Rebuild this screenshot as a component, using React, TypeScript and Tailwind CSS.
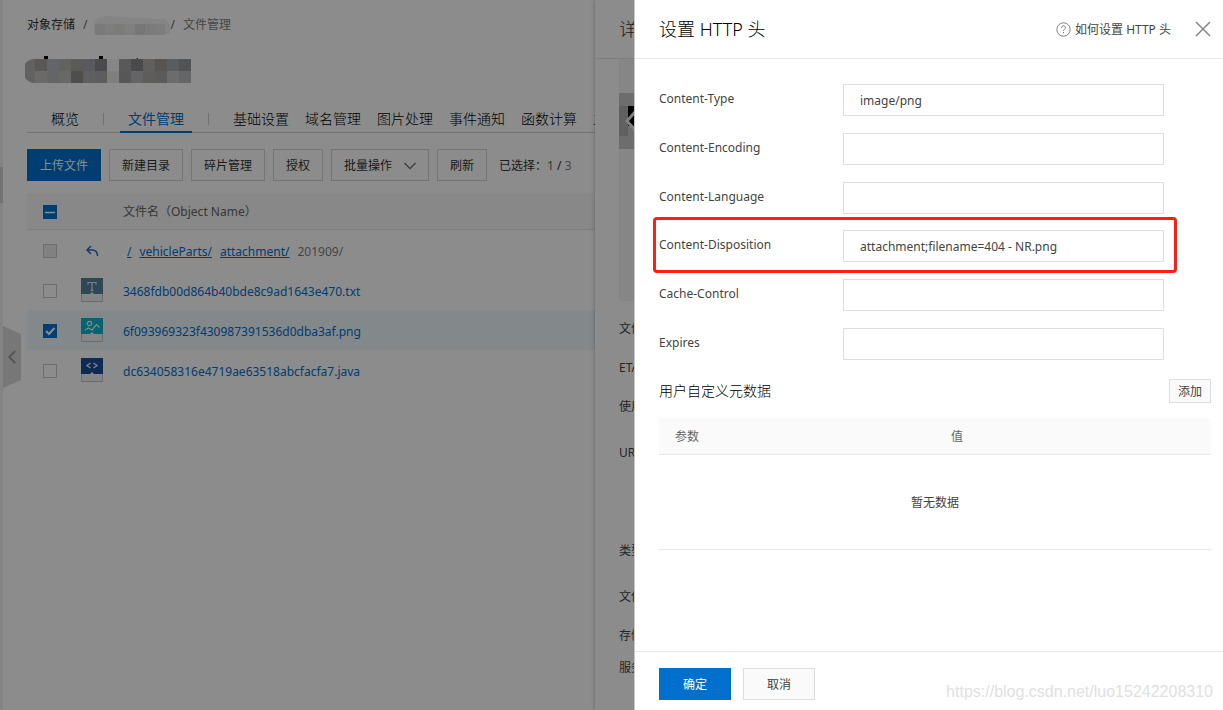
import type { ReactNode } from "react";
import { ChevronLeft } from "lucide-react";

const tabs = ["基础设置", "域名管理", "图片处理", "事件通知", "函数计算", "主"];

const details = [
  { label: "文件名", gap: "mt-[18px]" },
  { label: "ETAG", gap: "mt-[19px]" },
  { label: "使用", gap: "mt-[19px]" },
  { label: "URL", gap: "mt-[26px]" },
  { label: "类型", gap: "mt-[78px]" },
  { label: "文件", gap: "mt-[26px]" },
  { label: "存储", gap: "mt-[19px]" },
  { label: "服务", gap: "mt-[12px]" },
];

const headers = [
  { name: "Content-Type", value: "image/png" },
  { name: "Content-Encoding", value: "" },
  { name: "Content-Language", value: "" },
  { name: "Content-Disposition", value: "attachment;filename=404 - NR.png", marked: true },
  { name: "Cache-Control", value: "" },
  { name: "Expires", value: "" },
];

type FileKind = "txt" | "png" | "java";

const files: { name: string; kind: FileKind; checked: boolean }[] = [
  { name: "3468fdb00d864b40bde8c9ad1643e470.txt", kind: "txt", checked: false },
  { name: "6f093969323f430987391536d0dba3af.png", kind: "png", checked: true },
  { name: "dc634058316e4719ae63518abcfacfa7.java", kind: "java", checked: false },
];

const titleBlocks = [
  ["#a5a19c", "#b5babd", "#b3b2ad", "#a8a59f", "#a2a5aa", "#89898c", "#f5f5f5", "#a3a3a5", "#87878a", "#b0aeab", "#9e999a", "#a6a8a9", "#95979a"],
  ["#c5c2bf", "#b6b9bc", "#bebebc", "#928e8a", "#abaeb1", "#a9a9ae", "#e9e8e5", "#9f9f9f", "#b5b7ba", "#aca9a4", "#a8a4a5", "#c5c5c5", "#b5b8bc"],
];

const crumbBlocks = ["#dedede", "#e3e3e2", "#e0e0df", "#e8e8e8", "#d9d9d8", "#dfe0df", "#e4e4e3"];

function FileIcon({ kind }: { kind: FileKind }) {
  const color = { txt: "#55809b", png: "#0bb4cd", java: "#1a4f9c" }[kind];
  return (
    <svg width="22" height="24" viewBox="0 0 22 24" aria-hidden="true">
      <path d="M.5 15v8.500h21V15" fill="#f2f2f2" stroke="#c4c4c4" />
      <path d="M0 0h22v16h-9l-2-2-2 2H0z" fill={color} />
      {kind === "txt" && (
        <path d="M7 6.500V4.500h8v2M11 4.500v8M9.500 12.500h3" fill="none" stroke="#e3ebef" strokeWidth="1.200" />
      )}
      {kind === "png" && (
        <g fill="none" stroke="#e8f9fb" strokeWidth="1.200">
          <circle cx="8.500" cy="5.500" r="2.200" />
          <path d="M4 12l3.500-2 3.500 2 4.500-5.500 3 3" />
        </g>
      )}
      {kind === "java" && (
        <path d="M9.500 5L6 7.500 9.500 10M12.500 5L16 7.500 12.500 10" fill="none" stroke="#edf2f9" strokeWidth="1.300" />
      )}
    </svg>
  );
}

function Box({ label, state }: { label: string; state: "on" | "off" | "mixed" | "disabled" }) {
  const filled = state === "on" || state === "mixed";
  return (
    <span className="relative flex size-3.5">
      <input
        type="checkbox"
        aria-label={label}
        defaultChecked={state === "on"}
        disabled={state === "disabled"}
        className={
          filled
            ? "size-3.5 appearance-none bg-[#0070cc]"
            : state === "disabled"
              ? "size-3.5 appearance-none border border-[#c8c8c8] bg-[#ebebeb]"
              : "size-3.5 appearance-none border border-[#c8c8c8] bg-white"
        }
      />
      {filled && (
        <svg className="pointer-events-none absolute inset-0" width="14" height="14" fill="none" stroke="#fff" strokeWidth="2">
          {state === "on" ? <path d="M3 7l3 3 5.500-6" /> : <path d="M2 7.500h10" strokeWidth="1.500" />}
        </svg>
      )}
    </span>
  );
}

function Tool({ children }: { children: ReactNode }) {
  return (
    <button type="button" className="flex h-8 items-center border border-[#d4d4d4] px-3 pt-0.5 whitespace-nowrap">
      {children}
    </button>
  );
}

function Page() {
  return (
    <div className="flex h-full bg-white">
      <aside className="relative w-[3px] shrink-0 bg-[#f0f0f0]">
        <div className="absolute top-[167px] h-9 w-[3px] bg-[#d0d0d0]" />
        <button type="button" aria-label="收起" className="absolute top-[326px] left-[3px] h-[62px] w-[18px]">
          <svg className="absolute inset-0" width="18" height="62">
            <path d="M0 0l18 8v46L0 62z" fill="#d9d9d9" />
          </svg>
          <ChevronLeft className="absolute top-[20px] -left-0.5 text-[#9a9a9a]" size={22} strokeWidth={2} />
        </button>
      </aside>
      <main className="min-w-0 flex-1 overflow-hidden pl-6">
        <nav className="flex h-12 items-center gap-2 pt-0.5">
          <a href="#oss">对象存储</a>
          <span className="text-[#666]">/</span>
          <svg className="-ml-0.5" width="77" height="20" aria-hidden="true">
            <path d="M1 8Q4 0 18 1l28 2 26 1 5 6v9H1z" fill="#f0f0f0" />
            {crumbBlocks.map((fill, i) => (
              <rect key={i} x={2 + i * 10} y="9" width="10" height="11" fill={fill} />
            ))}
          </svg>
          <span className="-ml-2 text-[#666]">/</span>
          <span className="text-[#808080]">文件管理</span>
        </nav>
        <h1 className="h-[57px]" aria-label="Bucket">
          <svg className="-ml-0.5" width="168" height="36" aria-hidden="true">
            <path d="M12 11A12 12 0 0 0 8 35h4z" fill="#b5b3b1" />
            <path d="M19 8h4v4h-4zM74 8h4v4h-4zM109 12l4-2v2z" fill="#000" />
            {titleBlocks.map((row, y) =>
              row.map((fill, x) => (
                <rect key={`${y}-${x}`} x={10 + x * 12} y={11 + y * 12} width="12" height="12" fill={fill} />
              )),
            )}
          </svg>
        </h1>
        <nav className="flex h-7 items-center border-b border-[#d4d4d4] text-sm font-light whitespace-nowrap text-black">
          <a href="#overview" className="px-6">概览</a>
          <span className="h-3 w-px bg-[#ccc]" />
          <a href="#files" className="mx-4 -mb-px h-7 border-b-2 border-[#0070cc] px-2 leading-7 font-normal text-[#0070cc]">
            文件管理
          </a>
          <span className="h-3 w-px bg-[#ccc]" />
          <div className="flex gap-4 pl-6">
            {tabs.map((tab) => (
              <a key={tab} href={`#${tab}`}>{tab}</a>
            ))}
          </div>
        </nav>
        <div className="flex items-center gap-2 pt-4 pb-3">
          <button type="button" className="h-8 border border-[#0070cc] bg-[#0070cc] px-3 pt-0.5 whitespace-nowrap text-white">
            上传文件
          </button>
          <Tool>新建目录</Tool>
          <Tool>碎片管理</Tool>
          <Tool>授权</Tool>
          <Tool>
            批量操作
            <svg className="ml-3" width="12" height="8" fill="none" stroke="#777" strokeWidth="1.500" aria-hidden="true">
              <path d="M.5 1L6 6.500 11.500 1" />
            </svg>
          </Tool>
          <Tool>刷新</Tool>
          <p className="ml-1 pt-0.5 whitespace-nowrap">
            已选择：<span className="text-[#35834a]">1</span> / <span className="text-[#808080]">3</span>
          </p>
        </div>
        <table className="w-full border-separate border-spacing-0">
          <thead>
            <tr className="h-[37px] bg-[#f7f7f7] text-left text-[#666]">
              <th className="w-[54px] border-b border-[#e3e3e3] pt-0.5 pl-4 font-normal"><Box label="全选" state="mixed" /></th>
              <th className="w-[42px] border-b border-[#e3e3e3]" aria-label="类型" />
              <th className="border-b border-[#e3e3e3] pt-0.5 font-normal">文件名（Object Name）</th>
            </tr>
          </thead>
          <tbody className="text-[#0070cc]">
            <tr className="h-10">
              <td className="pt-0.5 pl-4"><Box label="上级目录" state="disabled" /></td>
              <td className="pt-0.5">
                <svg className="ml-1" width="14" height="12" fill="none" stroke="#2d6bb4" strokeWidth="1.500" aria-hidden="true">
                  <path d="M6 1L2 5l4 4M2 5h5c4 0 5.500 2 5.500 6" />
                </svg>
              </td>
              <td className="pt-1">
                <div className="flex gap-2 pl-1">
                  <a href="#root" className="underline">/</a>
                  <a href="#vehicleParts" className="underline">vehicleParts/</a>
                  <a href="#attachment" className="underline">attachment/</a>
                  <span className="text-[#808080]">201909/</span>
                </div>
              </td>
            </tr>
            {files.map((file) => (
              <tr key={file.name} className={file.checked ? "h-10 bg-[#eff7fe]" : "h-10"}>
                <td className="pt-0.5 pl-4"><Box label={file.name} state={file.checked ? "on" : "off"} /></td>
                <td><FileIcon kind={file.kind} /></td>
                <td className="pt-1"><a href={`#${file.name}`}>{file.name}</a></td>
              </tr>
            ))}
          </tbody>
        </table>
      </main>
    </div>
  );
}

function DetailDrawer() {
  return (
    <section className="absolute inset-y-0 right-0 w-[628px] bg-white shadow-[0_0_4px_rgba(0,0,0,0.3)]">
      <h2 className="h-[59px] border-b border-[#e5e5e5] px-6 text-lg leading-[58px] font-light">详情</h2>
      <div className="px-6">
        <div className="h-[242px] bg-[#f5f5f5] pt-[34px]">
          <svg width="96" height="56" aria-hidden="true">
            <path d="M0 0h96v56H0z" fill="#c6c6c6" />
            <path d="M0 13h9v30H0z" fill="#b0b0b0" />
            <path d="M9 13h14v20H9z" fill="#000" />
            <path d="M16 19l-8 9 8 9" fill="none" stroke="#e8e8e8" strokeWidth="3" />
          </svg>
        </div>
        <dl className="leading-5 text-[#444]">
          {details.map((item, i) => (
            <dt key={i} className={item.gap}>{item.label}</dt>
          ))}
        </dl>
      </div>
    </section>
  );
}

function HeaderDrawer() {
  return (
    <section role="dialog" aria-label="设置 HTTP 头" className="absolute inset-y-0 right-0 flex w-[589px] flex-col border-l border-[#c8c8c8] bg-white">
      <header className="flex h-[59px] shrink-0 items-center border-b border-[#e8e8e8] pr-3 pl-6">
        <h2 className="flex-1 text-lg font-light text-black">设置 HTTP 头</h2>
        <a href="#help" className="flex items-center gap-1 pt-0.5 text-[#444]">
          <svg className="-mt-0.5" width="15" height="15" fill="none" stroke="#777" aria-hidden="true">
            <circle cx="7.500" cy="7.500" r="6.700" strokeWidth=".9" />
            <path d="M5.500 6c0-3 4-2.700 4-.3 0 1.500-2 1.500-2 3.200M7.500 10v1.200" />
          </svg>
          如何设置 HTTP 头
        </a>
        <button type="button" aria-label="关闭" className="ml-6">
          <svg width="16" height="16" stroke="#888" strokeWidth="1.500">
            <path d="M1 1l14 14M15 1L1 15" />
          </svg>
        </button>
      </header>
      <form className="flex flex-1 flex-col pt-[25px] pr-3 pl-6">
        <div className="flex h-[276px] flex-col justify-between">
          {headers.map((h) => (
            <div key={h.name} className="relative flex h-8">
              <label htmlFor={h.name} className="w-[184px] shrink-0 leading-[30px] text-[#444]">{h.name}</label>
              <input
                id={h.name}
                defaultValue={h.value}
                className="mr-[47px] h-8 min-w-0 flex-1 border border-[#dedede] px-4 text-[#444] outline-none"
              />
              {h.marked && (
                <span className="pointer-events-none absolute -top-[13px] right-[34px] -bottom-[11px] -left-1.5 rounded border-3 border-[#ff1e14]" />
              )}
            </div>
          ))}
        </div>
        <div className="mt-[19px] flex h-6 items-center justify-between">
          <h3 className="text-sm font-light text-black">用户自定义元数据</h3>
          <button type="button" className="h-6 border border-[#dedede] bg-[#fafafa] px-2 pt-0.5 text-[#444]">添加</button>
        </div>
        <table className="mt-[15px] w-full table-fixed border-separate border-spacing-0">
          <thead>
            <tr className="h-[37px] bg-[#fafafa] text-left text-[#666]">
              <th className="border-b border-[#e8e8e8] px-4 pt-0.5 font-normal">参数</th>
              <th className="border-b border-[#e8e8e8] px-4 pt-0.5 font-normal">值</th>
            </tr>
          </thead>
          <tbody>
            <tr className="h-[95px]">
              <td colSpan={2} className="border-b border-[#e8e8e8] pt-0.5 text-center text-[#444]">暂无数据</td>
            </tr>
          </tbody>
        </table>
      </form>
      <footer className="flex h-[59px] shrink-0 gap-3 border-t border-[#e8e8e8] pt-4 pr-2.5 pl-6">
        <button type="button" className="h-8 w-[72px] bg-[#0070cc] pt-0.5 text-white">确定</button>
        <button type="button" className="h-8 w-[72px] border border-[#dedede] bg-[#fafafa] pt-0.5 text-[#444]">取消</button>
        <p className="ml-auto pt-3 font-['Liberation_Sans',sans-serif] text-base leading-6 text-[#e0e0e0]">
          https://blog.csdn.net/luo15242208310
        </p>
      </footer>
    </section>
  );
}

export default function App() {
  return (
    <div className="relative h-screen overflow-hidden font-['Noto_Sans','Noto_Sans_CJK_SC',sans-serif] text-xs text-[#333]">
      <Page />
      <DetailDrawer />
      <div className="absolute inset-0 bg-black/45" />
      <HeaderDrawer />
    </div>
  );
}
